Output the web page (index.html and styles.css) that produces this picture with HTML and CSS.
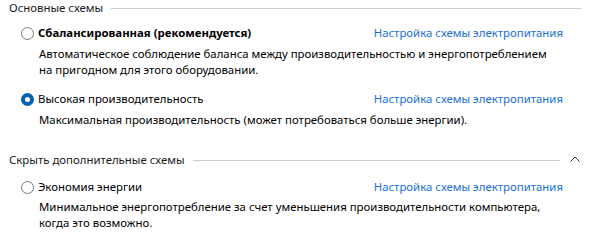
FILE: index.html
```html
<!DOCTYPE html>
<html lang="ru">
<head>
<meta charset="utf-8">
<link rel="stylesheet" href="styles.css">
</head>
<body>
<div class="panel">
  <div class="section-head">
    <span class="section-title">Основные схемы</span>
    <span class="rule"></span>
  </div>

  <div class="plan first">
    <div class="plan-row">
      <span class="radio"></span>
      <span class="plan-name bold">Сбалансированная (рекомендуется)</span>
      <a class="plan-link" href="#">Настройка схемы электропитания</a>
    </div>
    <div class="plan-desc">Автоматическое соблюдение баланса между производительностью и энергопотреблением<br>на пригодном для этого оборудовании.</div>
  </div>

  <div class="plan">
    <div class="plan-row">
      <span class="radio checked"></span>
      <span class="plan-name">Высокая производительность</span>
      <a class="plan-link" href="#">Настройка схемы электропитания</a>
    </div>
    <div class="plan-desc">Максимальная производительность (может потребоваться больше энергии).</div>
  </div>

  <div class="section-head second">
    <span class="section-title">Скрыть дополнительные схемы</span>
    <span class="rule short"></span>
    <svg class="chevron" width="10" height="6" viewBox="0 0 10 6"><path d="M0.5 5.5 L5 1 L9.5 5.5" fill="none" stroke="#333" stroke-width="1"/></svg>
  </div>

  <div class="plan third">
    <div class="plan-row">
      <span class="radio"></span>
      <span class="plan-name">Экономия энергии</span>
      <a class="plan-link" href="#">Настройка схемы электропитания</a>
    </div>
    <div class="plan-desc tight">Минимальное энергопотребление за счет уменьшения производительности компьютера,<br>когда это возможно.</div>
  </div>
</div>
</body>
</html>
```

FILE: styles.css
```css
html, body {
  margin: 0;
  padding: 0;
  background: #ffffff;
}

body {
  font-family: "Noto Sans", "Open Sans", sans-serif;
  font-size: 11.4px;
  line-height: 16px;
  color: #000;
}

.panel {
  width: 600px;
  height: 251px;
  display: flex;
  flex-direction: column;
}

.section-head {
  display: flex;
  align-items: center;
  height: 16px;
  padding-left: 9px;
}

.section-head.second {
  margin-top: 24px;
}

.section-title {
  color: #1a1a1a;
  white-space: nowrap;
}

.rule {
  flex: 1;
  height: 1px;
  background: #cccccc;
  margin-left: 8px;
  margin-right: 19px;
}

.rule.short {
  margin-right: 10px;
}

.chevron {
  margin-right: 20px;
  margin-top: -3px;
}

.plan {
  margin-top: 13px;
}

.plan.first {
  margin-top: 9px;
}

.plan.third {
  margin-top: 11px;
}

.plan-row {
  display: flex;
  align-items: center;
  height: 16px;
  padding-left: 21px;
}

.radio {
  width: 11px;
  height: 11px;
  border: 1px solid #7a7a7a;
  border-radius: 50%;
  background: #fff;
  box-sizing: content-box;
  flex: none;
}

.radio.checked {
  width: 5px;
  height: 5px;
  border: 4px solid #0063b1;
  background: #fff;
}

.plan-name {
  margin-left: 4px;
  white-space: nowrap;
}

.plan-name.bold {
  font-weight: bold;
}

.plan-link {
  margin-left: auto;
  margin-right: 37px;
  color: #1a6fd6;
  text-decoration: none;
  white-space: nowrap;
}

.plan-desc {
  padding-left: 39px;
  margin-top: 5px;
}

.plan-desc.tight {
  margin-top: 4px;
}
```
